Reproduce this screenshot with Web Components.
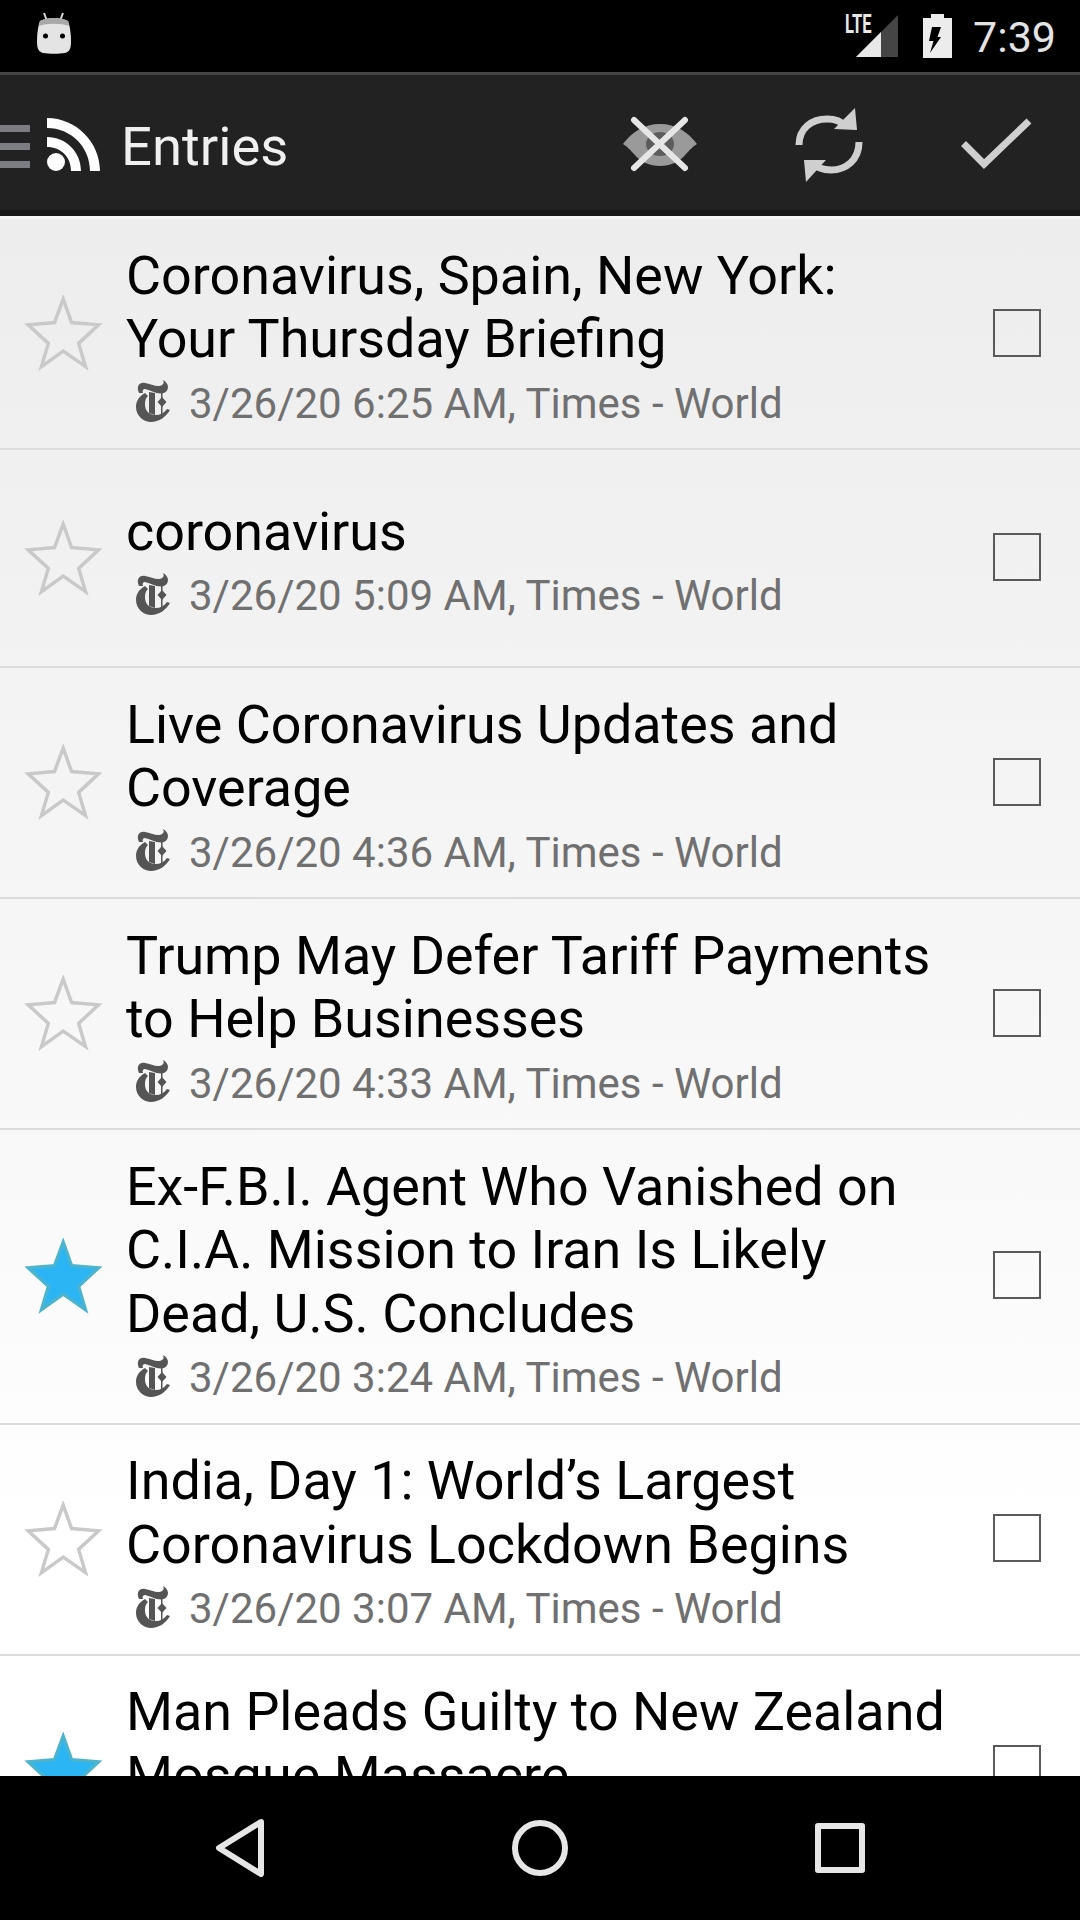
<!DOCTYPE html>
<html>
<head>
<meta charset="utf-8">
<title>Entries</title>
<style>
    html, body { margin: 0; padding: 0; background: #000; }
    body { font-family: Roboto, "Liberation Sans", sans-serif; }
</style>
</head>
<body>
<news-app>
    <status-bar slot="status"></status-bar>
    <action-bar slot="actions" heading="Entries"></action-bar>
    <entry-list slot="list">
        <entry-row meta="3/26/20 6:25 AM, Times - World">Coronavirus, Spain, New York: Your Thursday Briefing</entry-row>
        <entry-row meta="3/26/20 5:09 AM, Times - World">coronavirus</entry-row>
        <entry-row meta="3/26/20 4:36 AM, Times - World">Live Coronavirus Updates and Coverage</entry-row>
        <entry-row meta="3/26/20 4:33 AM, Times - World">Trump May Defer Tariff Payments to Help Businesses</entry-row>
        <entry-row starred meta="3/26/20 3:24 AM, Times - World">Ex-F.B.I. Agent Who Vanished on C.I.A. Mission to Iran Is Likely Dead, U.S. Concludes</entry-row>
        <entry-row meta="3/26/20 3:07 AM, Times - World">India, Day 1: World’s Largest Coronavirus Lockdown Begins</entry-row>
        <entry-row starred meta="3/26/20 2:58 AM, Times - World">Man Pleads Guilty to New Zealand Mosque Massacre</entry-row>
    </entry-list>
    <nav-bar slot="nav"></nav-bar>
</news-app>

<script>
class NewsApp extends HTMLElement {
    constructor() {
        super();
        this.attachShadow({ mode: 'open' });
        this.shadowRoot.innerHTML = `
            <style>
                :host {
                    display: flex;
                    flex-direction: column;
                    width: 1080px;
                    height: 1920px;
                    overflow: hidden;
                }
                .list {
                    flex: 1;
                    min-height: 0;
                    overflow: hidden;
                }
            </style>
            <slot name="status"></slot>
            <slot name="actions"></slot>
            <div class="list"><slot name="list"></slot></div>
            <slot name="nav"></slot>
        `;
    }
}

class StatusBar extends HTMLElement {
    constructor() {
        super();
        this.attachShadow({ mode: 'open' });
        this.shadowRoot.innerHTML = `
            <style>
                :host {
                    display: flex;
                    align-items: center;
                    height: 72px;
                    background: #000;
                    color: #e4e4e4;
                    padding: 0 24px 0 37px;
                    box-sizing: border-box;
                }
                svg { display: block; }
                .spacer { flex: 1; }
                .signal { position: relative; width: 53px; height: 42px; }
                .lte {
                    position: absolute;
                    left: 0;
                    top: -3px;
                    font-size: 25px;
                    line-height: 25px;
                    font-weight: 700;
                    color: #e8e8e8;
                    transform: scaleX(.66);
                    transform-origin: left top;
                }
                .battery { margin-left: 25px; margin-top: -1px; }
                .time { margin-left: 21px; font-size: 43px; line-height: 48px; margin-top: 2px; }
            </style>
            <svg width="34" height="42" viewBox="0 0 34 42" style="margin-top:-6px">
                <path d="M7 1 L10 9 M26 1 L23 9" stroke="#d8d8d8" stroke-width="2"/>
                <path d="M3 9 C10 5 24 5 31 9 C33 14 34 22 34 30 C34 37 32 40 28 41 C22 42 12 42 6 41 C2 40 0 37 0 30 C0 22 1 14 3 9 Z" fill="#e4e4e4"/>
                <path d="M3 9 C10 5 24 5 31 9 L32 14 C24 11 10 11 2 14 Z" fill="#a8a8a8"/>
                <circle cx="8.500" cy="24" r="2.500" fill="#000"/>
                <circle cx="25.500" cy="24" r="2.500" fill="#000"/>
            </svg>
            <div class="spacer"></div>
            <div class="signal">
                <svg width="53" height="42" viewBox="0 0 53 42">
                    <path d="M53 0 V42 H11 Z" fill="#454545"/>
                    <path d="M36 17 V42 H11 Z" fill="#e8e8e8"/>
                </svg>
                <span class="lte">LTE</span>
            </div>
            <svg class="battery" width="29" height="44" viewBox="0 0 29 44">
                <path d="M0 4 H8 V0 H21 V4 H29 V44 H0 Z" fill="#ececec"/>
                <path d="M9 13 H18 L14.500 23 H18 L7 39 L10.500 27 H6 Z" fill="#000"/>
            </svg>
            <span class="time">7:39</span>
        `;
    }
}

class ActionBar extends HTMLElement {
    constructor() {
        super();
        this.attachShadow({ mode: 'open' });
        this.shadowRoot.innerHTML = `
            <style>
                :host {
                    display: flex;
                    align-items: center;
                    box-sizing: border-box;
                    height: 144px;
                    background: #222;
                    border-top: 3px solid #454545;
                    border-bottom: 6px solid #1a1a1a;
                }
                svg { display: block; flex: none; }
                .menu { display: flex; flex-direction: column; gap: 11px; width: 30px; margin-top: 8px; }
                .menu i { display: block; height: 7px; background: #7b7d82; }
                .rss { margin-left: 17px; margin-top: 4px; }
                h1 {
                    margin: 7px 0 0 21px;
                    font-size: 54.400px;
                    font-weight: 400;
                    color: #f0f0f0;
                    flex: 1;
                }
                .eye, .sync { margin-right: 95px; }
                .eye { margin-top: 3px; }
                .sync, .done { margin-top: 5px; }
                .done { margin-right: 46px; }
            </style>
            <div class="menu"><i></i><i></i><i></i></div>
            <svg class="rss" width="53" height="53" viewBox="0 0 53 53">
                <circle cx="9" cy="44" r="9" fill="#fff"/>
                <path d="M0 19 C19 19 34 34 34 53 H24 C24 39 14 29 0 29 Z" fill="#fff"/>
                <path d="M0 0 C29 0 53 24 53 53 H43 C43 29 24 10 0 10 Z" fill="#fff"/>
            </svg>
            <h1></h1>
            <svg class="eye" width="80" height="56" viewBox="0 0 80 56">
                <path d="M3 28 C12 16 24 8 40 8 C56 8 68 16 77 28 C72 31 70 34 66 38 C60 46 50 50 40 50 C30 50 20 46 14 38 C10 34 8 31 3 28 Z" fill="#9a9a9a"/>
                <ellipse cx="40" cy="28" rx="14" ry="12" fill="#5c5c5c"/>
                <path d="M14 4 L65 52 M65 4 L14 52" stroke="#e6e6e6" stroke-width="6" stroke-linecap="round"/>
            </svg>
            <svg class="sync" width="68" height="74" viewBox="0 0 68 74">
                <path d="M4 37 C4 20 17 11 32 11 C39 11 46 13 50 18" fill="none" stroke="#cfcfcf" stroke-width="7"/>
                <path d="M60 0 L62 22 L39 21 Z" fill="#cfcfcf"/>
                <path d="M64 34 C64 52 51 62 36 62 C29 62 22 60 18 55" fill="none" stroke="#cfcfcf" stroke-width="7"/>
                <path d="M11 74 L9 52 L31 52 Z" fill="#cfcfcf"/>
            </svg>
            <svg class="done" width="76" height="56" viewBox="0 0 76 56">
                <path d="M5.500 26.500 L26 47 L71 4" fill="none" stroke="#cfcfcf" stroke-width="7"/>
            </svg>
        `;
        this.shadowRoot.querySelector('h1').textContent = this.getAttribute('heading');
    }
}

class EntryList extends HTMLElement {
    constructor() {
        super();
        this.attachShadow({ mode: 'open' });
        this.shadowRoot.innerHTML = `
            <style>
                :host {
                    display: block;
                    background: linear-gradient(#ededed 0, #fbfbfb 1100px, #fff 1300px);
                    border-top: 3px solid #f8f8f8;
                    min-height: 100%;
                }
            </style>
            <slot></slot>
        `;
    }
}

class EntryRow extends HTMLElement {
    constructor() {
        super();
        this.attachShadow({ mode: 'open' });
        this.shadowRoot.innerHTML = `
            <style>
                :host {
                    display: flex;
                    align-items: center;
                    box-sizing: border-box;
                    min-height: 218px;
                    border-bottom: 2px solid #dcdcdc;
                    padding: 0 39px 0 24px;
                }
                svg { display: block; flex: none; }
                .star { margin-right: 23px; }
                .star path { fill: none; stroke: #c9c9c9; stroke-width: 3.700; }
                :host([starred]) .star path { fill: #2cb5f5; stroke: #4cb4cc; stroke-width: 3.500; }
                .body { flex: 1; min-width: 0; padding: 24.500px 0 17px; }
                .title {
                    font-size: 53.850px;
                    line-height: 63.500px;
                    color: #000;
                }
                .meta {
                    display: flex;
                    align-items: center;
                    margin-top: 4.500px;
                    padding-left: 10px;
                    height: 56px;
                    font-size: 42px;
                    color: #707070;
                    white-space: nowrap;
                }
                .meta svg { margin: -4px 19px 0 0; }
                .check {
                    flex: none;
                    box-sizing: border-box;
                    width: 48px;
                    height: 48px;
                    border: 2px solid #5a5a5a;
                    margin: -2px 0 0 43px;
                }
            </style>
            <svg class="star" width="79" height="77" viewBox="-1.500 -1.500 79 77">
                <path transform="translate(37.850 36.350) scale(.93) translate(-37.850 -36.350)" d="M37.700 0 L46.700 25.300 L75.700 27.700 L54.300 47.700 L61.700 72.700 L37.700 56 L14.300 72.700 L21.700 47.700 L0 27.700 L28.300 25.300 Z"/>
            </svg>
            <div class="body">
                <div class="title"><slot></slot></div>
                <div class="meta">
                    <svg width="34" height="42" viewBox="0 0 34 42" fill="#555">
                        <path d="M3 13 C0 7 3 2 9 3 C15 4 22 8 26 5 C28 4 28 2 27 0 C33 3 34 10 28 13 C22 15 14 10 9 9 C7 9 6 11 7 13 Z"/>
                        <path d="M9 13 C2 17 0 22 0 27 C0 36 8 42 15 42 C23 42 30 37 34 30 L31 29 C28 33 24 35 20 35 C13 35 9 31 9 24 C9 20 10 18 12 16 Z"/>
                        <path d="M13 12 L19 13 V35 L13 33 Z"/>
                        <path d="M25 13 H26.500 V34 H25 Z"/>
                        <path d="M26 17 L30.500 22 L26 27 L21.500 22 Z"/>
                    </svg>
                    <span class="meta-text"></span>
                </div>
            </div>
            <div class="check"></div>
        `;
        this.shadowRoot.querySelector('.meta-text').textContent = this.getAttribute('meta');
    }
}

class NavBar extends HTMLElement {
    constructor() {
        super();
        this.attachShadow({ mode: 'open' });
        this.shadowRoot.innerHTML = `
            <style>
                :host {
                    display: flex;
                    justify-content: center;
                    align-items: center;
                    gap: 246px;
                    height: 144px;
                    background: #000;
                }
                svg { display: block; }
            </style>
            <svg width="50" height="58" viewBox="0 0 50 58" fill="none" stroke="#e6e6e6" stroke-width="6" stroke-linejoin="round">
                <path d="M46 3 L4 29 L46 55 Z"/>
            </svg>
            <svg width="58" height="58" viewBox="0 0 58 58" fill="none" stroke="#e6e6e6" stroke-width="6">
                <circle cx="29" cy="29" r="25"/>
            </svg>
            <svg width="50" height="50" viewBox="0 0 50 50" fill="none" stroke="#e6e6e6" stroke-width="6" stroke-linejoin="round">
                <rect x="3" y="3" width="44" height="44"/>
            </svg>
        `;
    }
}

customElements.define('news-app', NewsApp);
customElements.define('status-bar', StatusBar);
customElements.define('action-bar', ActionBar);
customElements.define('entry-list', EntryList);
customElements.define('entry-row', EntryRow);
customElements.define('nav-bar', NavBar);
</script>
</body>
</html>
